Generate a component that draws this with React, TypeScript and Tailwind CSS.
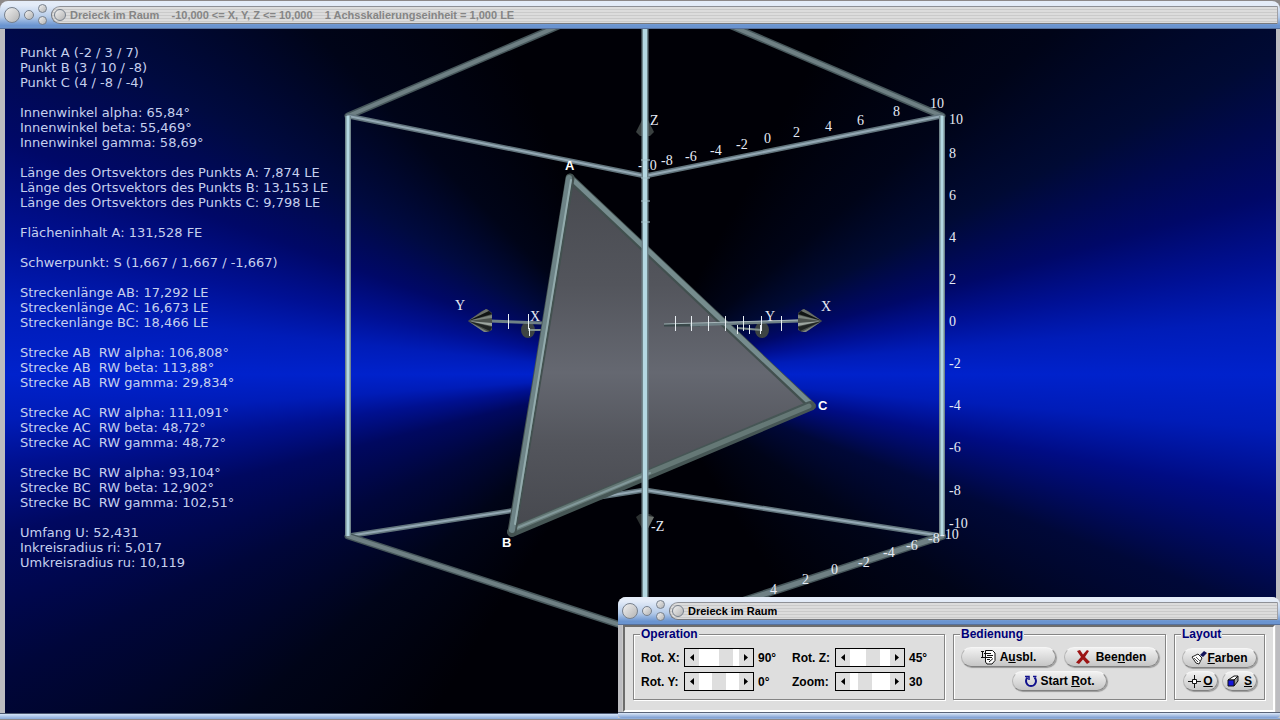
import { useState } from "react";
import type { ReactNode } from "react";

const infoBlocks = [
  ["Punkt A (-2 / 3 / 7)", "Punkt B (3 / 10 / -8)", "Punkt C (4 / -8 / -4)"],
  ["Innenwinkel alpha: 65,84°", "Innenwinkel beta: 55,469°", "Innenwinkel gamma: 58,69°"],
  [
    "Länge des Ortsvektors des Punkts A: 7,874 LE",
    "Länge des Ortsvektors des Punkts B: 13,153 LE",
    "Länge des Ortsvektors des Punkts C: 9,798 LE",
  ],
  ["Flächeninhalt A: 131,528 FE"],
  ["Schwerpunkt: S (1,667 / 1,667 / -1,667)"],
  ["Streckenlänge AB: 17,292 LE", "Streckenlänge AC: 16,673 LE", "Streckenlänge BC: 18,466 LE"],
  ["Strecke AB  RW alpha: 106,808°", "Strecke AB  RW beta: 113,88°", "Strecke AB  RW gamma: 29,834°"],
  ["Strecke AC  RW alpha: 111,091°", "Strecke AC  RW beta: 48,72°", "Strecke AC  RW gamma: 48,72°"],
  ["Strecke BC  RW alpha: 93,104°", "Strecke BC  RW beta: 12,902°", "Strecke BC  RW gamma: 102,51°"],
  ["Umfang U: 52,431", "Inkreisradius ri: 5,017", "Umkreisradius ru: 10,119"],
];

type Label = [text: string, x: number, y: number];

const scaleLabels: Label[] = [
  ["10", 930, 108],
  ["8", 893, 116],
  ["6", 857, 125],
  ["4", 825, 131],
  ["2", 793, 137],
  ["0", 764, 143],
  ["-2", 736, 149],
  ["-4", 710, 155],
  ["-6", 685, 161],
  ["-8", 661, 165],
  ["-10", 638, 170],
  ["10", 949, 124],
  ["8", 949, 158],
  ["6", 949, 200],
  ["4", 949, 242],
  ["2", 949, 284],
  ["0", 949, 326],
  ["-2", 949, 368],
  ["-4", 949, 410],
  ["-6", 949, 452],
  ["-8", 949, 495],
  ["-10", 949, 528],
  ["-10", 940, 539],
  ["-8", 928, 543],
  ["-6", 906, 550],
  ["-4", 883, 557],
  ["-2", 858, 567],
  ["0", 831, 574],
  ["2", 802, 584],
  ["4", 770, 594],
  ["6", 738, 607],
];

const axisLabels: Label[] = [
  ["Y", 455, 310],
  ["X", 530, 321],
  ["Y", 765, 321],
  ["X", 821, 311],
  ["Z", 650, 125],
  ["-Z", 651, 531],
];

const cornerLabels: Label[] = [
  ["A", 565, 170],
  ["B", 502, 547],
  ["C", 818, 410],
];

interface BeamProps {
  points: [number, number, number, number];
  width: number;
  dark?: boolean;
}

const Beam = ({ points: [x1, y1, x2, y2], width, dark }: BeamProps) => (
  <g strokeLinecap="round">
    <line x1={x1} y1={y1} x2={x2} y2={y2} stroke={dark ? "#46565a" : "#61747c"} strokeWidth={width} />
    <line x1={x1} y1={y1} x2={x2} y2={y2} stroke={dark ? "#6f8084" : "#94a8b4"} strokeWidth={width - 3} />
  </g>
);

const Post = ({ x, y1, y2, width }: { x: number; y1: number; y2: number; width: number }) => (
  <g>
    <line x1={x} y1={y1} x2={x} y2={y2} stroke="#71868c" strokeWidth={width} />
    <line x1={x} y1={y1} x2={x} y2={y2} stroke="#b4d8e2" strokeWidth={width - 3} />
  </g>
);

// Arrow head pointing left, mirrored for the right end of the axis
const Cone = ({ x, y, flip }: { x: number; y: number; flip?: boolean }) => (
  <g transform={`translate(${x} ${y}) scale(${flip ? -1 : 1} 1)`}>
    <path d="M0 0L14 -10L19 -12L24 -8V9L20 11L15 10Z" fill="#4a504c" />
    <path d="M0 0L18 -12L21 -10Z" fill="#6a706a" />
    <path d="M0 0L21 -10L24 -7Z" fill="#101413" />
    <path d="M0 0L24 -6V-3Z" fill="#7c847e" />
    <path d="M0 0L24 2V5Z" fill="#9ca59f" />
    <path d="M0 0L24 6L22 10Z" fill="#1e2322" />
    <path d="M0 0L20 11L16 11Z" fill="#7c847e" />
  </g>
);

const Ticks = ({ xs, y1, y2 }: { xs: number[]; y1: number; y2: number }) => (
  <path d={xs.map((x) => `M${x}.5 ${y1}V${y2}`).join("")} stroke="#e8eef2" strokeWidth={1} />
);

const Scene = () => (
  <svg
    className="absolute inset-0 size-full"
    viewBox="5 29 1271 684"
    preserveAspectRatio="xMidYMid slice"
    role="img"
    aria-label="Dreieck ABC im Raum"
  >
    <defs>
      <linearGradient id="face" x1="0" y1="0" x2="0" y2="1">
        <stop offset="0" stopColor="#484a50" />
        <stop offset="0.3" stopColor="#53555c" />
        <stop offset="0.55" stopColor="#656871" />
        <stop offset="0.75" stopColor="#53555c" />
        <stop offset="1" stopColor="#46484e" />
      </linearGradient>
    </defs>

    {/* Cube edges behind the triangle */}
    <Beam points={[348, 116, 645, -11]} width={7} dark />
    <Beam points={[942, 116, 645, -11]} width={7} dark />
    <Beam points={[348, 116, 645, 176]} width={5} />
    <Beam points={[942, 116, 645, 176]} width={5} />
    <Beam points={[348, 536, 645, 490]} width={5} />
    <Beam points={[942, 536, 645, 490]} width={5} />
    <Beam points={[348, 536, 645, 633]} width={7} dark />
    <Beam points={[942, 536, 645, 633]} width={8} dark />
    <Post x={348} y1={116} y2={536} width={6} />
    <Post x={942} y1={116} y2={536} width={6} />

    {/* Z axis */}
    <path d="M645 114 L654 132 L650 136 H640 L636 132Z" fill="#3a4040" />
    <path d="M645 534 L654 517 L650 514 H640 L636 517Z" fill="#2c3131" />
    <path d="M648 516 L654 517 L647 530Z" fill="#6a706c" />

    {/* Far ends of the X and Y axes */}
    <ellipse cx="528" cy="330" rx="7" ry="8" fill="#3d4443" />
    <path d="M528 330 H542" stroke="#80908e" strokeWidth="2" />
    <path d="M490 321 L542 323" stroke="#6f8186" strokeWidth="3" />
    <Ticks xs={[508, 528]} y1={314} y2={329} />
    <Ticks xs={[529]} y1={328} y2={336} />
    <Cone x={468} y={321} />

    <polygon points="570,178 512,532 812,406" fill="url(#face)" />
    <g strokeLinecap="round" fill="none">
      <path d="M570 178 L812 406" stroke="#42504f" strokeWidth="8" />
      <path d="M571 178 L812 405" stroke="#768c8e" strokeWidth="5" />
      <path d="M810 406 L512 532" stroke="#465655" strokeWidth="10" />
      <path d="M809 406 L512 530" stroke="#657876" strokeWidth="5" />
      <path d="M650 473 L512 530" stroke="#82989a" strokeWidth="2" />
      <path d="M570 178 L512 532" stroke="#435150" strokeWidth="9" />
      <path d="M569 178 L512 530" stroke="#6d8386" strokeWidth="6" />
      <path d="M571 180 L515 524" stroke="#93abad" strokeWidth="2" />
    </g>

    {/* Near ends of the X and Y axes */}
    <ellipse cx="762" cy="330" rx="7" ry="8" fill="#3d4443" />
    <path d="M737 328 L762 330" stroke="#80908e" strokeWidth="2" />
    <path d="M664 325 L700 325" stroke="#39484a" strokeWidth="3" />
    <path d="M690 325 L799 321" stroke="#6f8186" strokeWidth="3" />
    <path d="M664 324 L799 320" stroke="#a5b5b8" strokeWidth="1" />
    <Ticks xs={[675, 691, 708, 725, 743, 761, 781]} y1={316} y2={331} />
    <Ticks xs={[737, 749, 760]} y1={325} y2={334} />
    <Cone x={822} y={321} flip />

    <g className="fill-[#e6ebf5] font-['Liberation_Serif',serif] text-[14px]">
      {[...scaleLabels, ...axisLabels].map(([text, x, y]) => (
        <text x={x} y={y} key={`${x}-${y}`}>
          {text}
        </text>
      ))}
    </g>

    {/* Front edge of the cube covers everything else */}
    <Post x={645} y1={20} y2={640} width={7} />
    <path d="M641 160H650M641 178H650M641 201H650M641 222H650" stroke="#a8c4cc" strokeWidth="1" />

    <g className="fill-white text-[13px] font-bold">
      {cornerLabels.map(([text, x, y]) => (
        <text x={x} y={y} key={text}>
          {text}
        </text>
      ))}
    </g>
  </svg>
);

const Knob = ({ label, className }: { label: string; className: string }) => (
  <button
    aria-label={label}
    className={`block shrink-0 rounded-full border border-[#77808c] bg-linear-to-br from-[#f0f0f0] to-[#b4b4b4] ${className}`}
  />
);

const TitleBar = ({ children, active }: { children: ReactNode; active?: boolean }) => (
  <header className="flex h-7 shrink-0 items-center gap-1 rounded-t-lg border-b border-[#56709a] bg-linear-to-b from-[#e4ecf8] from-15% via-[#b4cae8] via-60% to-[#6a94d0] to-90% pl-1">
    <Knob label="Schließen" className="size-4" />
    <Knob label="Minimieren" className="size-2.5" />
    <div className="flex flex-col gap-[3px]">
      <Knob label="Maximieren" className="size-[9px]" />
      <Knob label="Einrollen" className="size-[9px]" />
    </div>
    <div className="mr-0.5 flex h-[18px] min-w-0 flex-1 items-center gap-1 rounded-l-full border border-t-[#8e9096] border-r-[#a0a0a4] border-b-[#77797e] border-l-[#77797e] bg-[repeating-linear-gradient(#dcdcdc_0px,#dcdcdc_2px,#cacaca_2px,#cacaca_3px)] pl-0.5">
      <Knob label="Menü" className="size-3" />
      <h1 className={`truncate text-[11px] leading-4 font-bold whitespace-pre ${active ? "text-black" : "text-[#858585]"}`}>
        {children}
      </h1>
    </div>
  </header>
);

interface ScrollerProps {
  id: string;
  label: string;
  unit?: string;
  min: number;
  max: number;
  initial: number;
}

const Scroller = ({ id, label, unit = "", min, max, initial }: ScrollerProps) => {
  const [value, setValue] = useState(initial);
  const step = (delta: number) => setValue(Math.min(max, Math.max(min, value + delta)));

  return (
    <div className="flex h-[19px] items-center">
      <label htmlFor={id} className="w-[43px]">
        {label}
      </label>
      <div className="flex h-[19px] w-[70px] items-center border border-black bg-white">
        <button
          onClick={() => step(-1)}
          aria-label={`${label} verringern`}
          className="flex h-full w-3.5 items-center justify-center bg-[#dedede]"
        >
          <svg className="h-[7px] w-1" viewBox="0 0 4 7">
            <path d="M4 0V7L0 3.5Z" />
          </svg>
        </button>
        <input
          id={id}
          type="range"
          min={min}
          max={max}
          value={value}
          onChange={(event) => setValue(Number(event.target.value))}
          className="h-full w-10 appearance-none bg-white [&::-webkit-slider-thumb]:h-[17px] [&::-webkit-slider-thumb]:w-3.5 [&::-webkit-slider-thumb]:appearance-none [&::-webkit-slider-thumb]:bg-[#dedede]"
        />
        <button
          onClick={() => step(1)}
          aria-label={`${label} erhöhen`}
          className="flex h-full w-3.5 items-center justify-center bg-[#dedede]"
        >
          <svg className="h-[7px] w-1" viewBox="0 0 4 7">
            <path d="M0 0V7L4 3.5Z" />
          </svg>
        </button>
      </div>
      <output htmlFor={id} className="pl-1">
        {value}
        {unit}
      </output>
    </div>
  );
};

const Group = ({ title, className, children }: { title: string; className: string; children: ReactNode }) => (
  <fieldset
    className={`min-w-0 border border-[#858585] px-1.5 shadow-[1px_1px_0_#fff,inset_1px_1px_0_#fff] ${className}`}
  >
    <legend className="bg-[#dedede] px-px leading-3 text-[#000078]">{title}</legend>
    {children}
  </fieldset>
);

const PillButton = ({ icon, className, children }: { icon: ReactNode; className: string; children: ReactNode }) => (
  <button
    className={`flex h-5 cursor-pointer items-center justify-center rounded-full border border-t-[#f6f6f6] border-r-[#8c8c8c] border-b-[#808080] border-l-[#b4b4b4] bg-linear-to-b from-[#f2f2f2] to-[#c6c6c6] shadow-[1px_1px_1px_#9a9a9a] ${className}`}
  >
    {icon}
    <span>{children}</span>
  </button>
);

const HideIcon = () => (
  <svg className="size-4" viewBox="0 0 16 16" fill="none" stroke="#111">
    <path d="M1 2.5H4M2.5 2.5V8.5M1 8.5H4" />
    <path d="M5.5 1.5H12.5L15 4V11.5L12 15H7L5.5 13Z" fill="#fff" />
    <path d="M4 4.5H11M7 6.5H13M4 8.5H12M7 10.5H10M9 13L13 9.5" />
  </svg>
);

const CrossIcon = () => (
  <svg className="size-3.5" viewBox="0 0 14 14">
    <path d="M1 1L4 0L7 4.5L11 0L13 1L9 7L14 12L11 14L7 9.5L3 14L0 12.5L5 7Z" fill="#9c1414" />
  </svg>
);

const RotateIcon = () => (
  <svg className="size-3.5" viewBox="0 0 14 14" fill="none" stroke="#10108c" strokeWidth="2">
    <path d="M3.5 3.5A5 5 0 1 0 10.5 3.5" />
    <path d="M1 2.5H5V6" strokeWidth="1.5" />
    <path d="M9 2.5H12.5" strokeWidth="1.5" />
  </svg>
);

const BrushIcon = () => (
  <svg className="h-3.5 w-4" viewBox="0 0 16 14">
    <path d="M1 6L7 3L11 7L8 13L5 12L3 9Z" fill="#fff" stroke="#222" />
    <path d="M3 7L7 11M5 6L9 10" stroke="#555" />
    <path d="M9 4L13 0L16 2L12 6Z" fill="#14145a" />
  </svg>
);

const OriginIcon = () => (
  <svg className="size-3.5" viewBox="0 0 14 14" fill="none" stroke="#111">
    <path d="M7.5 1V5M7.5 10V14M1 7.5H5M10 7.5H14" />
    <path d="M5.5 5.5H9.5V9.5H5.5Z" fill="#fff" />
  </svg>
);

const SolidIcon = () => (
  <svg className="size-3.5" viewBox="0 0 14 14" stroke="#111">
    <path d="M2 6L8 2H12L8 6Z" fill="#fff" />
    <path d="M8 6L12 2V7L8 12Z" fill="#999" />
    <path d="M2 6H8V12H2Z" fill="#1414d8" />
  </svg>
);

const ControlWindow = () => (
  <section className="absolute right-0 bottom-0.5 z-10 flex w-[662px] max-w-full flex-col rounded-t-lg bg-[#c8c8c8]">
    <TitleBar active>Dreieck im Raum</TitleBar>
    <div className="border-x-4 border-[#bcbcc0] px-px">
      <div className="flex gap-2 border-2 border-t-[#6c6c6c] border-r-white border-b-white border-l-[#6c6c6c] bg-[#dedede] px-2 pt-px pb-2.5 text-[12px] leading-4 font-bold text-black">
        <Group title="Operation" className="w-[312px]">
          <div className="grid grid-cols-[151px_auto] gap-y-[5px] px-px pt-2 pb-2">
            <Scroller id="rot-x" label="Rot. X:" unit="°" min={-180} max={180} initial={90} />
            <Scroller id="rot-z" label="Rot. Z:" unit="°" min={-180} max={180} initial={45} />
            <Scroller id="rot-y" label="Rot. Y:" unit="°" min={-180} max={180} initial={0} />
            <Scroller id="zoom" label="Zoom:" min={0} max={100} initial={30} />
          </div>
        </Group>
        <Group title="Bedienung" className="w-[213px]">
          <div className="flex flex-wrap justify-center gap-x-2 gap-y-1 pt-[7px]">
            <PillButton className="w-[95px] gap-1" icon={<HideIcon />}>
              A<u>u</u>sbl.
            </PillButton>
            <PillButton className="w-[95px] gap-1.5" icon={<CrossIcon />}>
              Bee<u>n</u>den
            </PillButton>
            <PillButton className="w-[95px] gap-0.5" icon={<RotateIcon />}>
              Start <u>R</u>ot.
            </PillButton>
          </div>
        </Group>
        <Group title="Layout" className="flex-1">
          <div className="flex flex-wrap justify-center gap-x-1 gap-y-[3px] pt-2">
            <PillButton className="w-[75px]" icon={<BrushIcon />}>
              <u>F</u>arben
            </PillButton>
            <PillButton className="w-[35px] gap-0.5" icon={<OriginIcon />}>
              <u>O</u>
            </PillButton>
            <PillButton className="w-[35px] gap-1" icon={<SolidIcon />}>
              <u>S</u>
            </PillButton>
          </div>
        </Group>
      </div>
    </div>
    <div className="h-1.5 rounded-b-sm border-t border-[#5a6478] bg-linear-to-b from-[#dce8f8] to-[#7c9cd0]" />
  </section>
);

export default function App() {
  return (
    <div className="relative flex h-screen flex-col overflow-hidden bg-[#8c8888] pt-px font-['Liberation_Sans',Arial,sans-serif]">
      <TitleBar>{"Dreieck im Raum    -10,000 <= X, Y, Z <= 10,000    1 Achsskalierungseinheit = 1,000 LE"}</TitleBar>
      <main className="relative min-h-0 flex-1 overflow-hidden border-r-4 border-l-5 border-[#bcbcc0] bg-[conic-gradient(at_50.4%_50.5%,#000006_0deg,#000006_28deg,#000418_50deg,#000a34_63deg,#000868_74deg,#001094_80deg,#001cb8_85deg,#0022cc_90deg,#001cb8_95deg,#000c84_101deg,#000838_111deg,#000418_125deg,#000006_148deg,#000006_212deg,#000418_230deg,#00063a_245deg,#000860_256deg,#001090_262deg,#001cb8_266deg,#0022cc_270deg,#001cb8_276deg,#001094_282deg,#000868_290deg,#000a40_301deg,#000418_316deg,#000006_338deg,#000006_360deg)]">
        <Scene />
        <div className="relative flex w-fit flex-col gap-[15px] pt-4 pl-[15px] font-['DejaVu_Sans',sans-serif] text-[13px] leading-[15px] whitespace-pre text-[#c6d0ee]">
          {infoBlocks.map((lines) => (
            <div key={lines[0]}>
              {lines.map((line) => (
                <p key={line}>{line}</p>
              ))}
            </div>
          ))}
        </div>
      </main>
      <footer className="mb-px h-1.5 shrink-0 border-t border-[#4c5870] bg-linear-to-b from-[#d4e4f8] to-[#88a8d8]" />
      <ControlWindow />
    </div>
  );
}
